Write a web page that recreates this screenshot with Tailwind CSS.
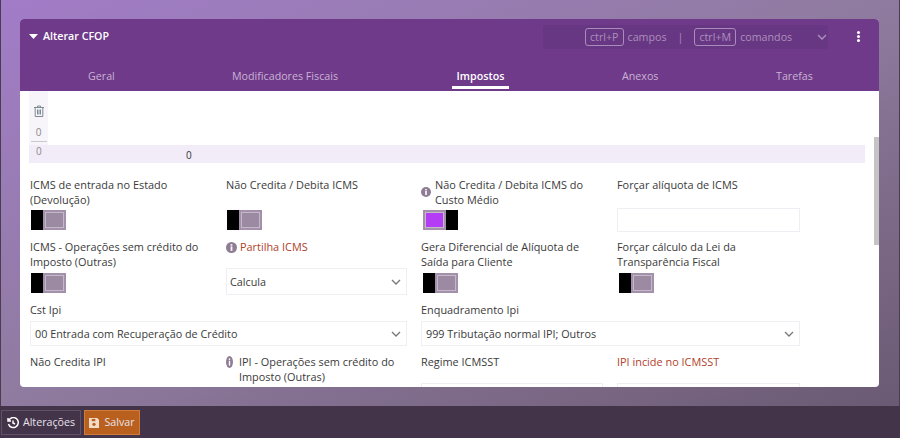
<!DOCTYPE html>
<html lang="pt-BR">
<head>
    <meta charset="UTF-8">
    <title>Alterar CFOP</title>
    <script src="https://cdn.jsdelivr.net/npm/@tailwindcss/browser@4"></script>
</head>
<body class="w-[900px] h-[438px] overflow-hidden flex flex-col font-['Open_Sans',sans-serif] text-[10.7px] text-[#3a3a3a]">

    <!-- Area principal -->
    <div class="h-[406px] pt-[19px] pl-[19px] bg-gradient-to-br from-[#a27cc8] via-[#8f7b9f] to-[#6b5a73] border-x border-x-[#4a3d52]">
        <div class="w-[859px] h-[368px] rounded-[4px] bg-white overflow-hidden flex flex-col relative">

            <!-- Cabecalho -->
            <div class="h-[72px] shrink-0 bg-[#6f3a8a] text-white">
                <div class="h-[35px] flex items-center pl-[9px]">
                    <svg class="w-[9px] h-[5px] mr-[5px]" viewBox="0 0 9 5"><path d="M0 0h9L4.500 5z" fill="#fff"/></svg>
                    <span class="font-semibold">Alterar CFOP</span>
                    <div class="ml-auto mr-[51px] w-[285px] h-[24px] rounded-[3px] bg-[#683783] flex items-center pl-[42px] text-[#ab8fbb]">
                        <span class="border border-[#a98cb9] rounded-[3px] px-[4px] h-[18px] leading-[17px]">ctrl+P</span>
                        <span class="ml-[4px] mt-[2px]">campos</span>
                        <span class="ml-[11px] mt-[2px]">|</span>
                        <span class="ml-[11px] border border-[#a98cb9] rounded-[3px] px-[4px] h-[18px] leading-[17px]">ctrl+M</span>
                        <span class="ml-[4px] mt-[2px]">comandos</span>
                        <svg class="w-[10px] h-[6px] ml-[25px]" viewBox="0 0 10 6"><path d="M1 1l4 4 4-4" fill="none" stroke="#a98cb9" stroke-width="1.500"/></svg>
                    </div>
                    <div class="absolute right-[19px] top-[12px] flex flex-col gap-[1px]">
                        <i class="block w-[3px] h-[3px] bg-white rounded-full"></i>
                        <i class="block w-[3px] h-[3px] bg-white rounded-full"></i>
                        <i class="block w-[3px] h-[3px] bg-white rounded-full"></i>
                    </div>
                </div>
                <div class="h-[37px] relative text-[#c9b3d3] font-medium">
                    <span class="absolute left-[68px] top-[14px]">Geral</span>
                    <span class="absolute left-[212px] top-[14px]">Modificadores Fiscais</span>
                    <span class="absolute left-[432px] top-[14px] h-[21px] w-[57px] border-b-[3px] border-white text-white text-center font-semibold">Impostos</span>
                    <span class="absolute left-[602px] top-[14px]">Anexos</span>
                    <span class="absolute left-[756px] top-[14px]">Tarefas</span>
                </div>
            </div>

            <!-- Barra de rolagem -->
            <div class="absolute right-0 top-[118px] w-[5px] h-[108px] bg-[#c4c4c4]"></div>

            <!-- Conteudo -->
            <div class="flex-1 overflow-hidden pl-[9px]">
                <div class="w-[19px] h-[54px] bg-[#f7f4fa] flex flex-col items-center text-[#8a8a8a] text-[10px]">
                    <svg class="w-[10px] h-[12px] mt-[14px]" viewBox="0 0 10 12" fill="none" stroke="#7c8a94"><path d="M0 2.500h10M3.500 2.500V1h3v1.500M1.200 2.500v9h7.600v-9M3.500 4.500v5M5 4.500v5M6.500 4.500v5"/></svg>
                    <span class="mt-[8px] leading-[15px]">0</span>
                    <div class="w-[16px] border-t border-[#c9c9c9] mt-[1px]"></div>
                </div>
                <div class="w-[836px] h-[18px] bg-[#f1ecf7] relative text-[10px]">
                    <span class="absolute left-[7px] top-[-1px] text-[#8a8a8a]">0</span>
                    <span class="absolute left-[157px] top-[3px] font-medium text-[#333]">0</span>
                </div>

                <div class="grid grid-cols-[196px_195px_196px_183px] mt-[14px] ml-[1px] leading-[15px] text-[10.9px]">
                    <!-- Linha 1 -->
                    <div class="h-[62px] pr-[14px]">
                        <p class="h-[33px]">ICMS de entrada no Estado (Devolução)</p>
                        <div class="w-[35px] h-[20px] flex ml-[1px]"><i class="w-[12px] bg-black"></i><i class="flex-1 border-2 border-[#a391ab] bg-[#9c8aa3] shadow-[inset_0_0_0_1px_#c4b8c9]"></i></div>
                    </div>
                    <div class="h-[62px] pr-[14px]">
                        <p class="h-[33px]">Não Credita / Debita ICMS</p>
                        <div class="w-[35px] h-[20px] flex ml-[1px]"><i class="w-[12px] bg-black"></i><i class="flex-1 border-2 border-[#a391ab] bg-[#9c8aa3] shadow-[inset_0_0_0_1px_#c4b8c9]"></i></div>
                    </div>
                    <div class="h-[62px] pr-[14px]">
                        <div class="h-[33px] flex items-start gap-[4px]">
                            <svg class="w-[10px] h-[10px] shrink-0 mt-[10px]" viewBox="0 0 10 10"><circle cx="5" cy="5" r="5" fill="#8f7d96"/><rect x="4.200" y="4" width="1.600" height="4" fill="#fff"/><rect x="4.200" y="2" width="1.600" height="1.400" fill="#fff"/></svg>
                            <p>Não Credita / Debita ICMS do Custo Médio</p>
                        </div>
                        <div class="w-[35px] h-[20px] flex ml-[2px]"><i class="flex-1 border-2 border-[#a391ab] bg-[#b53cf5] shadow-[inset_0_0_0_1px_#c4b8c9]"></i><i class="w-[12px] bg-black"></i></div>
                    </div>
                    <div class="h-[62px]">
                        <p class="h-[31px]">Forçar alíquota de ICMS</p>
                        <div class="h-[24px] border border-[#f0edf3]"></div>
                    </div>

                    <!-- Linha 2 -->
                    <div class="h-[63px] pr-[14px]">
                        <p class="h-[34px]">ICMS - Operações sem crédito do Imposto (Outras)</p>
                        <div class="w-[35px] h-[20px] flex ml-[1px]"><i class="w-[12px] bg-black"></i><i class="flex-1 border-2 border-[#a391ab] bg-[#9c8aa3] shadow-[inset_0_0_0_1px_#c4b8c9]"></i></div>
                    </div>
                    <div class="h-[63px] pr-[14px]">
                        <div class="h-[29px] flex gap-[3px] items-start text-[#b0412a]">
                            <svg class="w-[11px] h-[11px] shrink-0 mt-[3px]" viewBox="0 0 10 10"><circle cx="5" cy="5" r="5" fill="#8f7d96"/><rect x="4.200" y="4" width="1.600" height="4" fill="#fff"/><rect x="4.200" y="2" width="1.600" height="1.400" fill="#fff"/></svg>
                            <p>Partilha ICMS</p>
                        </div>
                        <div class="h-[27px] border border-[#f0edf3] flex items-center pl-[3px] pr-[5px] justify-between text-[10.8px]">
                            <span>Calcula</span>
                            <svg class="w-[10px] h-[6px]" viewBox="0 0 10 6"><path d="M1 1l4 4 4-4" fill="none" stroke="#777" stroke-width="1.300"/></svg>
                        </div>
                    </div>
                    <div class="h-[63px] pr-[14px]">
                        <p class="h-[34px]">Gera Diferencial de Alíquota de Saída para Cliente</p>
                        <div class="w-[35px] h-[20px] flex ml-[2px]"><i class="w-[12px] bg-black"></i><i class="flex-1 border-2 border-[#a391ab] bg-[#9c8aa3] shadow-[inset_0_0_0_1px_#c4b8c9]"></i></div>
                    </div>
                    <div class="h-[63px] pr-[8px]">
                        <p class="h-[34px]">Forçar cálculo da Lei da Transparência Fiscal</p>
                        <div class="w-[35px] h-[20px] flex ml-[2px]"><i class="w-[12px] bg-black"></i><i class="flex-1 border-2 border-[#a391ab] bg-[#9c8aa3] shadow-[inset_0_0_0_1px_#c4b8c9]"></i></div>
                    </div>

                    <!-- Linha 3 -->
                    <div class="col-span-2 h-[44px] pr-[14px]">
                        <p class="h-[19px]">Cst Ipi</p>
                        <div class="h-[25px] border border-[#f0edf3] flex items-center pl-[4px] pr-[5px] justify-between text-[10.8px]">
                            <span>00 Entrada com Recuperação de Crédito</span>
                            <svg class="w-[10px] h-[6px]" viewBox="0 0 10 6"><path d="M1 1l4 4 4-4" fill="none" stroke="#777" stroke-width="1.300"/></svg>
                        </div>
                    </div>
                    <div class="col-span-2 h-[44px]">
                        <p class="h-[19px]">Enquadramento Ipi</p>
                        <div class="h-[25px] border border-[#f0edf3] flex items-center pl-[4px] pr-[5px] justify-between text-[10.8px]">
                            <span>999 Tributação normal IPI; Outros</span>
                            <svg class="w-[10px] h-[6px]" viewBox="0 0 10 6"><path d="M1 1l4 4 4-4" fill="none" stroke="#777" stroke-width="1.300"/></svg>
                        </div>
                    </div>

                    <!-- Linha 4 -->
                    <div class="pt-[8px]"><p>Não Credita IPI</p></div>
                    <div class="pt-[8px] pr-[8px] flex items-start gap-[6px]">
                        <svg class="w-[7px] h-[12px] shrink-0 mt-[2px]" viewBox="0 0 10 10" preserveAspectRatio="none"><circle cx="5" cy="5" r="5" fill="#8f7d96"/><rect x="4" y="4" width="2" height="4" fill="#fff"/><rect x="4" y="2" width="2" height="1.400" fill="#fff"/></svg>
                        <p>IPI - Operações sem crédito do Imposto (Outras)</p>
                    </div>
                    <div class="pt-[8px] pr-[14px]">
                        <p class="h-[29px]">Regime ICMSST</p>
                        <div class="h-[26px] border border-[#f0edf3]"></div>
                    </div>
                    <div class="pt-[8px]">
                        <p class="h-[29px] text-[#b0412a]">IPI incide no ICMSST</p>
                        <div class="h-[26px] border border-[#f0edf3]"></div>
                    </div>
                </div>
            </div>
        </div>
    </div>

    <!-- Rodape -->
    <div class="h-[32px] bg-[#43344a] flex items-center pl-[1px] pt-[1px] gap-[3px] text-[#e8e2ea]">
        <button class="h-[25px] w-[80px] border border-[#5f5166] flex items-center justify-center gap-[4px] font-medium">
            <svg class="w-[12px] h-[12px]" viewBox="0 0 12 12" fill="none" stroke="#fff" stroke-width="1.500"><path d="M2 3a5 5 0 1 1-.5 4M1 1v3h3M6 3.500V6l2 1"/></svg>
            Alterações
        </button>
        <button class="h-[25px] w-[56px] bg-[#b9601f] border border-[#cf7c3a] flex items-center justify-center gap-[5px] font-medium">
            <svg class="w-[10px] h-[10px]" viewBox="0 0 11 11"><path d="M0 0h9l2 2v9H0z" fill="#f2dcc9"/><rect x="3" y="1" width="4" height="2.500" fill="#b9601f"/><circle cx="5.500" cy="7" r="1.800" fill="#b9601f"/></svg>
            Salvar
        </button>
    </div>
</body>
</html>
